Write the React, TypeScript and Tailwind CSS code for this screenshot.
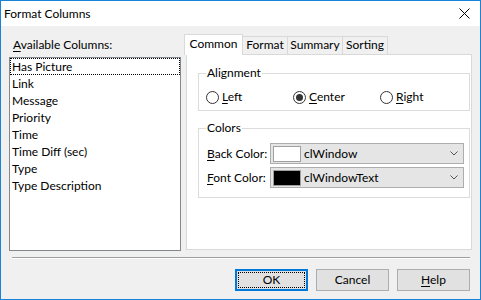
import React from "react";

const items = ["Has Picture", "Link", "Message", "Priority", "Time", "Time Diff (sec)", "Type", "Type Description"];

function Radio({ checked }: { checked?: boolean }) {
  return (
    <svg width="13" height="13" viewBox="0 0 13 13" className="shrink-0">
      <circle cx="6.5" cy="6.5" r="6" fill="#fff" stroke="#333" strokeWidth="1" />
      {checked && <circle cx="6.5" cy="6.5" r="3.5" fill="#333" />}
    </svg>
  );
}

function Combo({ swatch, text }: { swatch: string; text: string }) {
  return (
    <div className="flex items-center h-[21px] w-[194px] border border-[#adadad] bg-[#e5e5e5] pl-[2px]">
      <div className="w-[28px] h-[16px] border border-[#a0a0a0]" style={{ background: swatch }} />
      <span className="ml-[3px] flex-1 leading-[16px] whitespace-nowrap">{text}</span>
      <svg width="8" height="5" viewBox="0 0 8 5" className="mr-[5px]">
        <path d="M0.5 0.5 L4 4 L7.5 0.5" fill="none" stroke="#555" strokeWidth="1" />
      </svg>
    </div>
  );
}

export default function App() {
  return (
    <div className="w-[481px] h-[300px] border border-[#1883d7] bg-[#f0f0f0] flex flex-col text-[12px] text-black font-['Lato',sans-serif] whitespace-nowrap overflow-hidden">
      <div className="h-[25px] bg-white flex items-center justify-between pl-[3px] pr-[10px]">
        <span className="leading-[16px]">Format Columns</span>
        <svg width="11" height="11" viewBox="0 0 11 11">
          <path d="M0.5 0.5 L10.5 10.5 M10.5 0.5 L0.5 10.5" stroke="#000" strokeWidth="1" />
        </svg>
      </div>
      <div className="flex h-[225px] items-start">
        <div className="ml-[8px] w-[172px] flex flex-col">
          <div className="mt-[11px] h-[16px] leading-[16px] pl-[4px]">
            <span className="underline underline-offset-2">A</span>vailable Columns:
          </div>
          <div className="mt-[4px] h-[194px] border border-[#828790] bg-white">
            {items.map((it, i) => (
              <div
                key={it}
                className={
                  "h-[17px] leading-[16px] pl-[1px] " +
                  (i === 0 ? "border border-dotted border-black" : "border border-transparent")
                }
              >
                {it}
              </div>
            ))}
          </div>
        </div>
        <div className="ml-[3px] mt-[8px] flex flex-col">
          <div className="flex h-[20px]">
            <div className="relative z-10 w-[59px] h-[21px] bg-white border border-b-0 border-[#d9d9d9] flex justify-center pt-[1px] leading-[16px]">
              Common
            </div>
            <div className="mt-[2px] w-[45px] h-[18px] border-t border-r border-[#d9d9d9] flex justify-center leading-[16px]">
              Format
            </div>
            <div className="mt-[2px] w-[55px] h-[18px] border-t border-r border-[#d9d9d9] flex justify-center leading-[16px]">
              Summary
            </div>
            <div className="mt-[2px] w-[45px] h-[18px] border-t border-r border-[#d9d9d9] flex justify-center leading-[16px]">
              Sorting
            </div>
          </div>
          <div className="ml-[2px] w-[286px] h-[196px] border border-[#d9d9d9] bg-white flex flex-col">
            <fieldset className="ml-[11px] mt-[10px] w-[272px] border border-[#dcdcdc] pb-[5px]">
              <legend className="ml-[7px] px-[1px] leading-[16px]">Alignment</legend>
              <div className="flex mt-[8px] pl-[7px] h-[16px] items-center">
                <div className="w-[87px] flex items-center gap-[3px]">
                  <Radio />
                  <span className="leading-[16px]"><span className="underline underline-offset-2">L</span>eft</span>
                </div>
                <div className="w-[87px] flex items-center gap-[3px]">
                  <Radio checked />
                  <span className="leading-[16px]"><span className="underline underline-offset-2">C</span>enter</span>
                </div>
                <div className="w-[87px] flex items-center gap-[3px]">
                  <Radio />
                  <span className="leading-[16px]"><span className="underline underline-offset-2">R</span>ight</span>
                </div>
              </div>
            </fieldset>
            <fieldset className="ml-[11px] mt-[9px] w-[272px] border border-[#dcdcdc] pb-[9px]">
              <legend className="ml-[7px] px-[1px] leading-[16px]">Colors</legend>
              <div className="mt-[7px] flex items-center pl-[8px]">
                <span className="w-[63px] leading-[16px]"><span className="underline underline-offset-2">B</span>ack Color:</span>
                <Combo swatch="#ffffff" text="clWindow" />
              </div>
              <div className="mt-[3px] flex items-center pl-[8px]">
                <span className="w-[63px] leading-[16px]"><span className="underline underline-offset-2">F</span>ont Color:</span>
                <Combo swatch="#000000" text="clWindowText" />
              </div>
            </fieldset>
          </div>
        </div>
      </div>
      <div className="mt-[6px] ml-[11px] w-[458px] h-[2px] border-t border-[#a0a0a0] border-b border-b-white" />
      <div className="mt-[10px] flex justify-end gap-[8px] pr-[10px]">
        <div className="w-[73px] h-[22px] border-2 border-[#0078d7] bg-[#e1e1e1] p-[1px]">
          <div className="w-full h-full border border-dotted border-black flex items-center justify-center leading-[16px]">OK</div>
        </div>
        <div className="w-[73px] h-[22px] border border-[#adadad] bg-[#e1e1e1] flex items-center justify-center leading-[16px]">Cancel</div>
        <div className="w-[73px] h-[22px] border border-[#adadad] bg-[#e1e1e1] flex items-center justify-center leading-[16px]">
          <span><span className="underline underline-offset-2">H</span>elp</span>
        </div>
      </div>
    </div>
  );
}
